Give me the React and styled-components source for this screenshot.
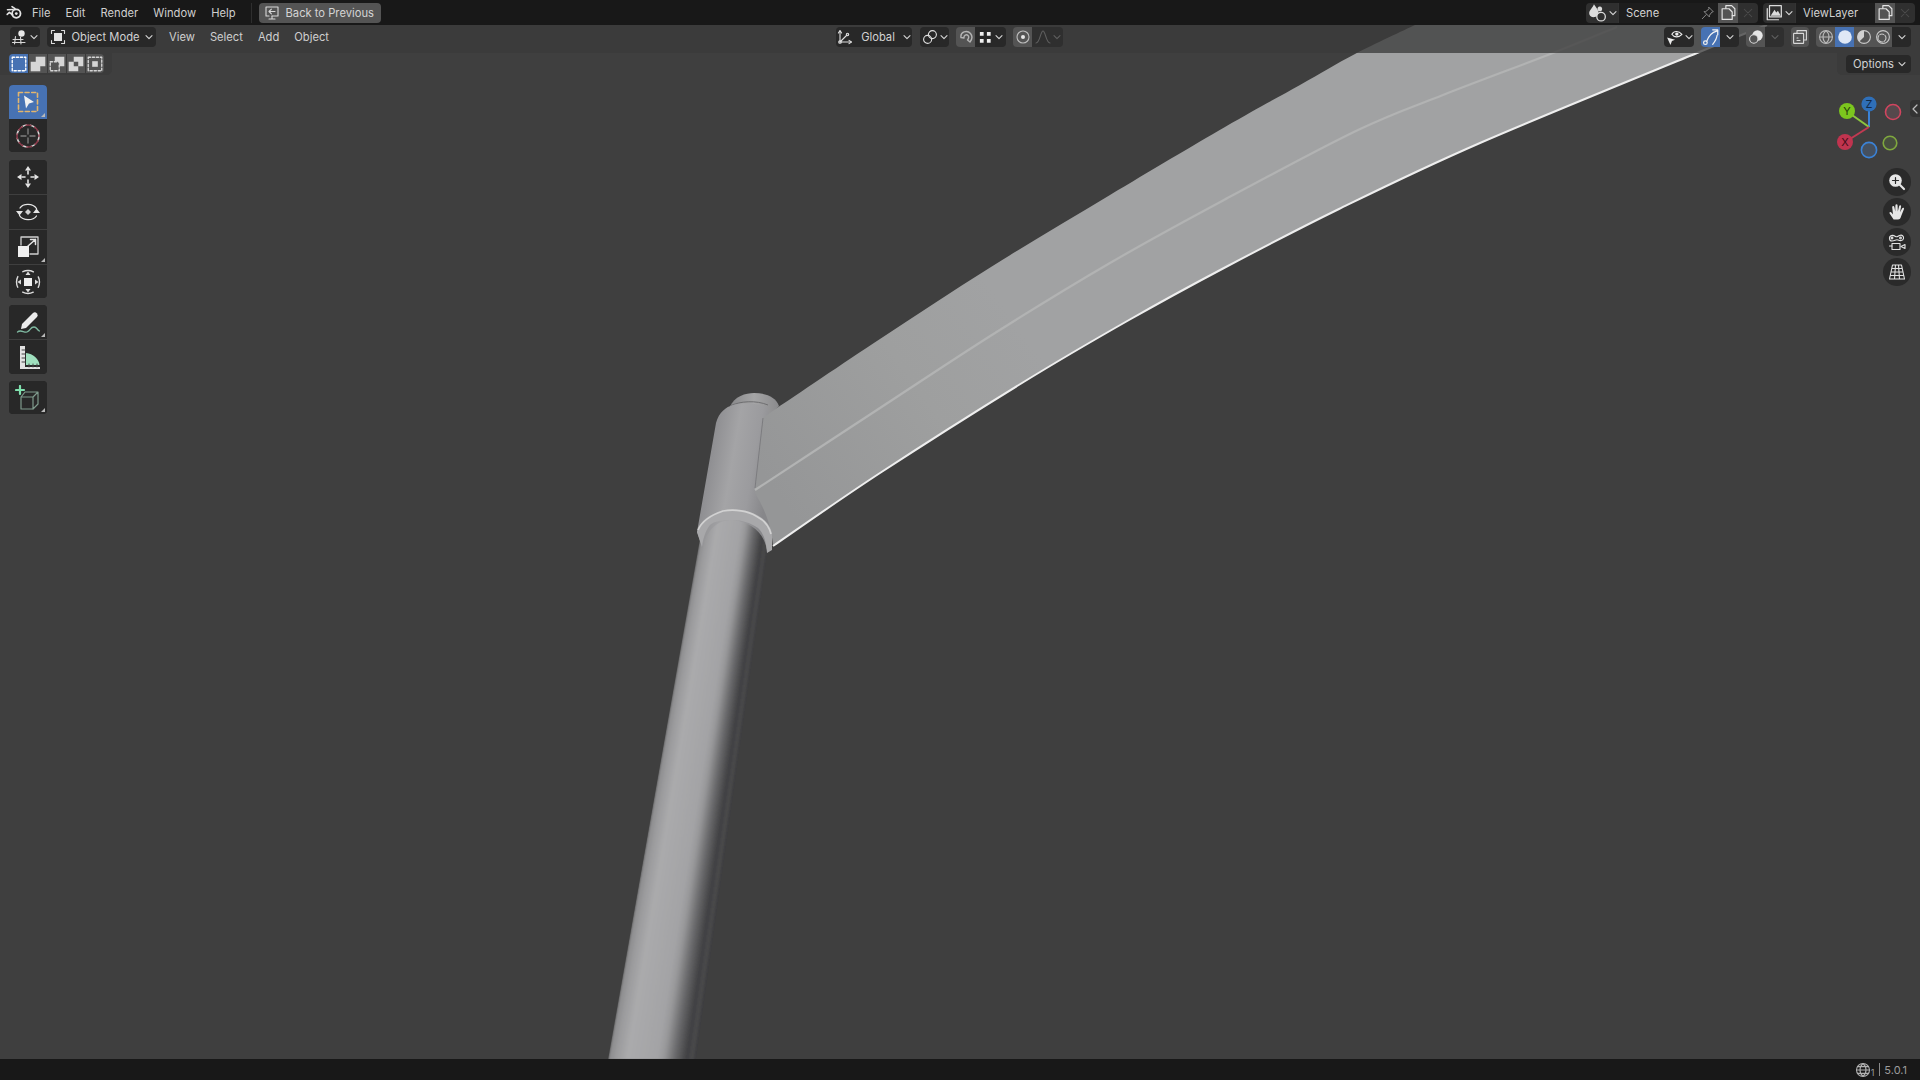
import React from 'react';
import styled, { createGlobalStyle } from 'styled-components';

const GlobalStyle = createGlobalStyle`
  html, body { margin: 0; padding: 0; background: #181818; overflow: hidden; }
  body { font-family: Inter, "Liberation Sans", sans-serif; }
`;

const Screen = styled.div`
  width: 1920px;
  height: 1080px;
  display: flex;
  flex-direction: column;
  font-size: 11.2px;
  color: #d2d2d2;
`;

const TopBar = styled.div`
  height: 25px;
  background: #181818;
  display: flex;
  align-items: center;
  padding: 0 5px 0 6px;
  flex: none;
`;

const Menu = styled.div`
  display: flex;
  gap: ${p => p.$gap || 15}px;
  align-items: center;
`;

const MenuItem = styled.span`
  color: #cfcfcf;
  line-height: 20px;
`;

const Divider = styled.div`
  width: 1px;
  height: 20px;
  background: #2e2e2e;
  margin: 0 7px 0 15px;
`;

const BackButton = styled.div`
  width: 122px;
  height: 20px;
  border-radius: 4px;
  background: #545454;
  display: flex;
  align-items: center;
  gap: 6px;
  padding-left: 5px;
  box-sizing: border-box;
  color: #d4d4d4;
`;

const Grow = styled.div`
  flex: 1;
`;

const Field = styled.div`
  width: ${p => p.$w}px;
  height: 20px;
  background: #1d1d1d;
  display: flex;
  align-items: center;
  justify-content: space-between;
  padding: 0 3px 0 7px;
  box-sizing: border-box;
  color: #d2d2d2;
  border-left: 1px solid #333;
`;

const Joined = styled.div`
  display: flex;
  align-items: center;
  margin-left: ${p => p.$ml || 0}px;
  & > *:first-child { border-radius: 4px 0 0 4px; }
  & > *:last-child { border-radius: 0 4px 4px 0; }
  & > *:only-child { border-radius: 4px; }
`;

const tones = {
  dark: '#282828',
  on: '#4772b3',
  lit: '#545454',
  dim: '#2f2f2f',
};

const Widget = styled.div`
  width: ${p => p.$w}px;
  height: ${p => p.$h || 20}px;
  flex: none;
  display: flex;
  align-items: center;
  justify-content: center;
  gap: ${p => p.$gap || 2}px;
  box-sizing: border-box;
  background: ${p => tones[p.$tone || 'dark']};
  color: ${p => (p.$faint ? '#5d5d5d' : '#dcdcdc')};
`;

const Viewport = styled.div`
  position: relative;
  flex: 1;
  background: #3f3f3f;
  overflow: hidden;
`;

const Scene = styled.svg`
  position: absolute;
  inset: 0;
  display: block;
`;

const Overlay = styled.div`
  position: absolute;
  inset: 0;
  display: flex;
  flex-direction: column;
`;

const HeaderRow = styled.div`
  height: 28px;
  flex: none;
  display: grid;
  grid-template-columns: 836px 1fr auto;
  align-items: center;
  background: rgba(58, 58, 58, 0.76);
  padding: 0 9px 4px 0;
  box-sizing: border-box;
`;

const HeaderGroup = styled.div`
  display: flex;
  align-items: center;
  padding-left: ${p => p.$pl || 0}px;
`;

const ModeLabel = styled.span`
  color: #d2d2d2;
  margin: 0 3px 0 3px;
`;

const SettingsRow = styled.div`
  height: 22px;
  flex: none;
  display: flex;
  justify-content: space-between;
`;

const SettingsCap = styled.div`
  width: ${p => p.$w}px;
  height: 22px;
  background: rgba(58, 58, 58, 0.76);
  border-radius: ${p => (p.$right ? '0 0 0 5px' : '0 0 5px 0')};
  display: flex;
  align-items: center;
  box-sizing: border-box;
  padding: 0 0 1px 9px;
`;

const OptionsButton = styled.div`
  width: 65px;
  height: 18px;
  background: #282828;
  border-radius: 4px;
  display: flex;
  align-items: center;
  justify-content: space-between;
  padding: 0 5px 0 7px;
  box-sizing: border-box;
  color: #d2d2d2;
`;

const SelectMode = styled.div`
  width: 19px;
  height: 19px;
  display: flex;
  align-items: center;
  justify-content: center;
  background: ${p => (p.$on ? '#4772b3' : '#545454')};
  border-left: ${p => (p.$on ? 'none' : '1px solid #3a3a3a')};
  box-sizing: border-box;
`;

const Toolbar = styled.div`
  position: absolute;
  left: 9px;
  top: 60px;
  display: flex;
  flex-direction: column;
`;

const ToolGroup = styled.div`
  width: 38px;
  margin-bottom: ${p => p.$mb || 0}px;
  border-radius: 4px;
  overflow: hidden;
  background: #282828;
  display: flex;
  flex-direction: column;
`;

const Tool = styled.div`
  position: relative;
  height: ${p => p.$h || 34}px;
  display: flex;
  align-items: center;
  justify-content: center;
  background: ${p => (p.$active ? '#4772b3' : '#282828')};
  border-top: ${p => (p.$sep ? '1px solid #3f3f3f' : 'none')};
  box-sizing: border-box;
  ${p => p.$corner && `
    &::after {
      content: '';
      position: absolute;
      right: 2px;
      bottom: 2px;
      border-style: solid;
      border-width: 0 0 4px 4px;
      border-color: transparent transparent #b9b9b9 transparent;
    }
  `}
`;

const GizmoBox = styled.svg`
  position: absolute;
  left: 1825px;
  top: 65px;
  display: block;
`;

const NavColumn = styled.div`
  position: absolute;
  left: 1883px;
  top: 143px;
  display: flex;
  flex-direction: column;
  gap: 2px;
`;

const NavButton = styled.div`
  width: 28px;
  height: 28px;
  border-radius: 50%;
  background: #2a2a2a;
  display: flex;
  align-items: center;
  justify-content: center;
`;

const SideTab = styled.div`
  position: absolute;
  right: 0;
  top: 75px;
  width: 10px;
  height: 17px;
  border-radius: 4px 0 0 4px;
  background: #333;
  display: flex;
  align-items: center;
  justify-content: center;
`;

const StatusBar = styled.div`
  height: 21px;
  flex: none;
  background: #181818;
  display: flex;
  align-items: center;
  justify-content: flex-end;
  padding-right: 13px;
  color: #9c9c9c;
  font-size: 11px;
`;

const Sub = styled.span`
  font-size: 9px;
  align-self: flex-end;
  margin: 0 5px 2px 0;
`;

const StatusSep = styled.span`
  width: 1px;
  height: 13px;
  background: #8a8a8a;
  margin-right: 4px;
`;

const Glyph = styled.svg`
  display: block;
  flex: none;
  fill: none;
  stroke: currentColor;
  stroke-width: ${p => p.$sw || 1.1};
  stroke-linecap: round;
  stroke-linejoin: round;
`;

const Ico = ({ s = 16, sw, color, children }) => (
  <Glyph width={s} height={s} viewBox="0 0 16 16" $sw={sw} style={color ? { color } : undefined}>
    {children}
  </Glyph>
);

const Chevron = ({ color = '#d6d6d6' }) => (
  <Glyph width={8} height={8} viewBox="0 0 8 8" $sw={1.1} style={{ color }}>
    <path d="M1 2.6 L4 5.6 L7 2.6" />
  </Glyph>
);

const W = '#e4e4e4';

const BlenderLogo = () => (
  <Glyph width={17} height={15} viewBox="0 0 17 15" $sw={1.8} style={{ color: W }}>
    <circle cx="10.3" cy="8.6" r="4.2" />
    <circle cx="10.3" cy="8.6" r="1.4" fill={W} stroke="none" />
    <path d="M7 4.5 L1.5 4.8 M9 3.7 L6 1.6 M6.8 10 L3.4 7.4 L1.2 9.4" strokeWidth="1.6" />
  </Glyph>
);

const BackIcon = () => (
  <Ico s={16} color="#d8d8d8">
    <path d="M5 11 H2 V2 H14 V11 H8" />
    <path d="M8 11 V14 M5 14 H11" />
    <path d="M11 6.5 H5 M7.4 4.2 L5 6.5 L7.4 8.8" />
  </Ico>
);

const ViewportIcon = () => (
  <Ico s={16} color="#d8d8d8">
    <path d="M1 10.5 H11 M3.5 7.5 L2.5 15 M8.5 8 L9 15 M0.5 13.5 H13" />
    <circle cx="9.5" cy="4.5" r="3.2" fill="#e8e8e8" stroke="none" />
  </Ico>
);

const ObjectIcon = () => (
  <Ico s={16} color="#dcdcdc">
    <rect x="4" y="4" width="8" height="8" fill="#e4e4e4" stroke="none" />
    <path d="M4.5 1.5 H1.5 V4.5 M11.5 1.5 H14.5 V4.5 M1.5 11.5 V14.5 H4.5 M14.5 11.5 V14.5 H11.5" />
  </Ico>
);

const DashBox = ({ x = 2.5, y = 2.5, s = 11, color = '#e8e8e8' }) => (
  <rect x={x} y={y} width={s} height={s} fill="none" stroke={color} strokeWidth="1.2" strokeDasharray="2 1.6" />
);

const ModeSet = () => (
  <Ico s={18}><DashBox x={2} y={2} s={12} color="#ffffff" /></Ico>
);

const ModeExtend = () => (
  <Ico s={18}>
    <rect x="1.5" y="6" width="8.5" height="8.5" fill="#d6d6d6" stroke="none" />
    <rect x="6" y="1.5" width="8.5" height="8.5" fill="#d6d6d6" stroke="none" />
  </Ico>
);

const ModeSubtract = () => (
  <Ico s={18}>
    <DashBox x={2} y={6} s={8} color="#d6d6d6" />
    <path d="M6 1.5 H14.5 V10 H10 V6 H6 Z" fill="#d6d6d6" stroke="none" />
  </Ico>
);

const ModeInvert = () => (
  <Ico s={18}>
    <path d="M6 1.5 H14.5 V10 H10 V6 H6 Z M1.5 6 H6 V10 H10 V14.5 H1.5 Z" fill="#d6d6d6" stroke="none" />
  </Ico>
);

const ModeIntersect = () => (
  <Ico s={18}>
    <DashBox x={2} y={2} s={12} color="#d6d6d6" />
    <rect x="5.5" y="5.5" width="5" height="5" fill="#d6d6d6" stroke="none" />
  </Ico>
);

const GlobalIcon = () => (
  <Ico s={16} color="#e0e0e0">
    <path d="M3 2 V13 H14" />
    <path d="M3 13 L10 6" />
    <path d="M1.4 4 L3 1.6 L4.6 4 M12 11.4 L14.5 13 L12 14.6" />
    <circle cx="3" cy="13" r="1.3" />
    <circle cx="10.5" cy="5.5" r="1.2" />
  </Ico>
);

const PivotIcon = () => (
  <Ico s={16} color="#e0e0e0">
    <circle cx="5.6" cy="10.4" r="4" />
    <circle cx="10.4" cy="5.6" r="4" />
  </Ico>
);

const MagnetIcon = () => (
  <Ico s={16} color="#b4b4b4" sw={1.4}>
    <path d="M3 8.5 C2 3 9 0.5 12.5 4.5 C14.5 7 14 10.5 12 13 L9.5 11 C11 9 11 7.5 10 6.5 C8.5 5 5.5 6 6 9 Z" />
  </Ico>
);

const GridIcon = () => (
  <Ico s={15}>
    <path d="M2 2 H6 V6 H2 Z M9.5 2 H13.5 V6 H9.5 Z M2 9.5 H6 V13.5 H2 Z M9.5 9.5 H13.5 V13.5 H9.5 Z" fill="#f0f0f0" stroke="none" />
  </Ico>
);

const ProportionalIcon = () => (
  <Ico s={16} color="#bcbcbc">
    <circle cx="8" cy="8" r="6" />
    <circle cx="8" cy="8" r="2" fill="#e6e6e6" stroke="none" />
  </Ico>
);

const FalloffIcon = () => (
  <Ico s={16} color="#5f5f5f">
    <path d="M1 14 C5 14 5.5 2 8 2 C10.5 2 11 14 15 14" />
  </Ico>
);

const VisibilityIcon = () => (
  <Ico s={17} color="#ececec">
    <path d="M5.5 5 C7.5 1.5 12 1.5 15 5 C12 8.2 7.5 8.2 5.5 5 Z" />
    <circle cx="10.2" cy="4.8" r="1.6" fill="#ececec" stroke="none" />
    <path d="M1 8 L8.5 10 L5.6 11.2 L4.2 15 Z" fill="#ececec" stroke="none" />
  </Ico>
);

const GizmoToggleIcon = () => (
  <Ico s={18} color="#f4f4f4">
    <circle cx="3" cy="13" r="1.6" />
    <path d="M4.2 11.8 C6 7 8 4 13 2.8 M9.5 1.6 H14 V6" />
    <path d="M9.5 14.5 C12 11.5 13.2 9 13.4 6.5" />
  </Ico>
);

const OverlayIcon = () => (
  <Ico s={16} color="#dcdcdc">
    <circle cx="9.5" cy="6.5" r="5.2" fill="#e6e6e6" stroke="none" />
    <circle cx="5.8" cy="10" r="4.2" fill="#545454" />
  </Ico>
);

const XrayIcon = () => (
  <Ico s={16} color="#d8d8d8">
    <path d="M5 4 V1.6 H14.4 V11 H12" />
    <rect x="1.6" y="4.4" width="10" height="10" rx="0.5" />
    <path d="M5 9 H6 M5 11.5 H8" />
  </Ico>
);

const WireIcon = () => (
  <Ico s={16} color="#b8b8b8">
    <circle cx="8" cy="8" r="6.4" />
    <path d="M1.6 8 H14.4 M8 1.6 C4 5 4 11 8 14.4 C12 11 12 5 8 1.6" />
  </Ico>
);

const SolidIcon = () => (
  <Ico s={16}><circle cx="8" cy="8" r="6.8" fill="#dfe8f6" stroke="none" /></Ico>
);

const MaterialIcon = () => (
  <Ico s={16} color="#c8c8c8">
    <circle cx="8" cy="8" r="6.4" />
    <path d="M8 1.6 A6.4 6.4 0 0 0 3.4 12.5 L8 8 Z" fill="#d0d0d0" stroke="none" />
  </Ico>
);

const RenderIcon = () => (
  <Ico s={16} color="#c8c8c8">
    <circle cx="8" cy="8" r="6.4" />
    <circle cx="7" cy="9" r="4" strokeDasharray="4 1.4" />
  </Ico>
);

const SceneIcon = () => (
  <Ico s={19} color="#dcdcdc">
    <path d="M5 1 C7 4 9 6 9 8.5 C9 11 6.5 12 4.5 12 C2 12 1 10 1 8.5 C1 6 4 4 5 1 Z" fill="#dcdcdc" stroke="none" />
    <circle cx="11" cy="11.5" r="3.6" fill="#2f2f2f" />
    <path d="M10 3 A2 2 0 1 1 9.9 3" fill="#dcdcdc" stroke="none" />
  </Ico>
);

const PinIcon = () => (
  <Ico s={14} color="#8a8a8a">
    <path d="M9 1.5 L14 6.5 L12.4 7 L9.6 10.6 L9.6 12.5 L3.5 6.4 L5.4 6.4 L9 3.4 Z M6 9.8 L1.5 14.5" />
  </Ico>
);

const CopyIcon = () => (
  <Ico s={17} color="#e4e4e4">
    <path d="M5.5 4 V1.5 H11 L14 4.5 V11 H11.5" />
    <path d="M2 4.5 H8.5 L11.5 7.5 V14.5 H2 Z" />
  </Ico>
);

const CrossIcon = () => (
  <Ico s={12} color="#4c4c4c" sw={1.4}>
    <path d="M3 3 L13 13 M13 3 L3 13" />
  </Ico>
);

const LayerIcon = () => (
  <Ico s={18} color="#dcdcdc">
    <rect x="4" y="1.5" width="10.5" height="10" />
    <path d="M2 4 V14 H12" />
    <path d="M5 10.5 L8.5 5 L10 7.5 L11.5 6 L14 10.5 Z" fill="#dcdcdc" stroke="none" />
  </Ico>
);

const Tg = ({ children }) => (
  <svg width="26" height="26" viewBox="0 0 26 26" style={{ display: 'block' }} fill="none" strokeLinecap="round" strokeLinejoin="round">
    {children}
  </svg>
);

const BoxTool = () => (
  <Tg>
    <rect x="3.5" y="3.5" width="19" height="19" stroke="#e2b56d" strokeWidth="1.6" strokeDasharray="4 2.6" />
    <path d="M9 6.5 L19 13 L14 14.5 L11 19.5 Z" fill="#f0f0f0" />
  </Tg>
);

const CursorTool = () => (
  <Tg>
    <circle cx="13" cy="13" r="11" stroke="#d8d8d8" strokeWidth="1.5" strokeDasharray="5 4" />
    <circle cx="13" cy="13" r="11" stroke="#8d3a4a" strokeWidth="1.5" strokeDasharray="5 4" strokeDashoffset="4.5" />
    <path d="M13 6 V11 M13 15 V20 M6 13 H11 M15 13 H20" stroke="#7d7d7d" strokeWidth="1.4" />
  </Tg>
);

const MoveTool = () => (
  <Tg>
    <path d="M13 2 L16 6.5 H10 Z M13 24 L16 19.5 H10 Z M2 13 L6.5 10 V16 Z M24 13 L19.5 10 V16 Z" fill="#e4e4e4" />
    <path d="M13 7 V10 M13 16 V19 M7 13 H10 M16 13 H19" stroke="#e4e4e4" strokeWidth="1.6" />
  </Tg>
);

const RotateTool = () => (
  <Tg>
    <path d="M5 9 C8 4 18 4 21.5 9.5 M21.5 17 C18 22 8 22 4.5 16.5" stroke="#e4e4e4" strokeWidth="1.3" />
    <path d="M1 12 H8 L4.5 16.5 Z M25 14 H18 L21.5 9.5 Z" fill="#e4e4e4" />
    <path d="M13 10 L16 13 L13 16 L10 13 Z" fill="#cfcfcf" />
  </Tg>
);

const ScaleTool = () => (
  <Tg>
    <path d="M6 11 V3 H23 V20 H15" stroke="#cfcfcf" strokeWidth="1.3" />
    <rect x="3" y="12" width="11" height="11" fill="#efefef" />
    <path d="M13 12 L20.5 5.5 M15.5 5.5 H20.5 V10.5" stroke="#e4e4e4" strokeWidth="1.5" />
  </Tg>
);

const TransformTool = () => (
  <Tg>
    <circle cx="13" cy="13" r="11.5" stroke="#dcdcdc" strokeWidth="1.4" strokeDasharray="11 7" strokeDashoffset="5.5" />
    <rect x="9" y="9" width="8" height="8" fill="#efefef" />
    <path d="M13 2.5 L15.5 6 H10.5 Z M13 23.5 L15.5 20 H10.5 Z M2.5 13 L6 10.5 V15.5 Z M23.5 13 L20 10.5 V15.5 Z" fill="#dcdcdc" />
  </Tg>
);

const AnnotateTool = () => (
  <Tg>
    <path d="M7 15 L18 4 Q20 2.5 22 4.5 Q23.5 6.5 22 8 L11 19 L6 20 Z" fill="#ececec" />
    <path d="M2.5 23 C6 20 9 24 12 23 C16 21.5 15 18 19 18 C22 18 22 21 24.5 22" stroke="#7fb9a1" strokeWidth="1.3" />
  </Tg>
);

const MeasureTool = () => (
  <Tg>
    <path d="M11 9 C18 9.5 24 15 24.5 21 H11 Z" fill="#9fe0be" />
    <path d="M5 2 H10 V23 H25 V25 H5 Z" fill="#e2e2e2" />
    <path d="M7 6 H10 M7 10 H10 M7 14 H10 M7 18 H10 M14 23 V20 M18 23 V20 M22 23 V20" stroke="#444" strokeWidth="1" />
  </Tg>
);

const AddCubeTool = () => (
  <Tg>
    <path d="M6 12 H18 V24 H6 Z M6 12 L10 7 H23 L18 12 M23 7 V19 L18 24" stroke="#7e9a8c" strokeWidth="1.2" />
    <path d="M5 1 V9 M1 5 H9" stroke="#7fe0ad" strokeWidth="2.2" />
  </Tg>
);

const ZoomIcon = () => (
  <Glyph width={18} height={18} viewBox="0 0 18 18" style={{ color: '#2a2a2a' }}>
    <circle cx="7.5" cy="7.5" r="6.3" fill="#e6e6e6" stroke="none" />
    <path d="M7.5 4.5 V10.5 M4.5 7.5 H10.5" strokeWidth="1.2" />
    <path d="M12 12 L16 16" stroke="#e6e6e6" strokeWidth="2.2" />
  </Glyph>
);

const HandIcon = () => (
  <Glyph width={18} height={18} viewBox="0 0 18 18" style={{ color: '#e6e6e6' }}>
    <path fill="#e6e6e6" stroke="none" d="M5.6 16.5 L1.6 10.6 Q1 9.4 2.2 9.1 Q3 9 3.8 10 L5 11.4 L4.2 4.2 Q4.2 3 5.2 3 Q6.2 3 6.4 4.2 L7.3 8.6 L7.4 2.4 Q7.5 1.2 8.5 1.2 Q9.5 1.2 9.6 2.4 L9.8 8.5 L11.2 3 Q11.5 2 12.4 2.2 Q13.3 2.5 13.1 3.6 L12 9.2 L14.2 5.2 Q14.8 4.4 15.6 4.8 Q16.3 5.3 15.9 6.2 L13.2 13 Q12.4 16.5 10 16.5 Z" />
  </Glyph>
);

const CameraIcon = () => (
  <Glyph width={20} height={20} viewBox="0 0 20 20" style={{ color: '#e2e2e2' }}>
    <path d="M5 9 C2 9 1.5 4.5 4.5 3.5 C6 3 7 3.5 8.5 4.5 C10 5.5 10.5 4.5 12.5 3.5 C15 2.5 17 4 16.5 6.5 C16 9 13 9 11 8 C9 7 8 9 5 9 Z" />
    <circle cx="5" cy="6" r="0.9" />
    <circle cx="13.5" cy="6" r="0.9" />
    <rect x="5" y="11.5" width="8" height="6" />
    <path d="M2.5 14 H5 M14 14.5 L18 12.5 V16.5 Z" />
  </Glyph>
);

const OrthoIcon = () => (
  <Glyph width={18} height={18} viewBox="0 0 18 18" style={{ color: '#e2e2e2' }}>
    <path d="M4.5 2 H13.5 L16.5 16 H1.5 Z M3 9 H15 M2.3 12.5 H15.8 M3.8 5.5 H14.2 M7.5 2 L6.5 16 M10.5 2 L11.5 16" />
  </Glyph>
);

const GlobeIcon = () => (
  <Ico s={16} color="#b0b0b0">
    <circle cx="8" cy="8" r="6.5" />
    <path d="M1.5 8 H14.5 M2.5 4.6 H13.5 M2.5 11.4 H13.5 M8 1.5 C4 5 4 11 8 14.5 C12 11 12 5 8 1.5" />
  </Ico>
);

// model outline, in page coordinates
const UPPER = [[777, 408], [880, 339], [991, 267], [1110, 195], [1225, 127], [1300, 85], [1355, 54], [1415, 25]];
const LOWER = [[773, 546], [880, 473], [1022, 383], [1129, 320], [1224, 268], [1339, 209], [1480, 143], [1697, 53], [1767, 25]];
const CREASE = [[755, 490], [880, 408], [995, 333], [1110, 263], [1224, 200], [1358, 130], [1443, 95], [1553, 53], [1617, 27]];

// smooth curve through the points
const curve = pts => {
  let d = `M${pts[0][0]} ${pts[0][1]}`;
  for (let i = 0; i < pts.length - 1; i++) {
    const a = pts[i - 1] || pts[i];
    const b = pts[i];
    const c = pts[i + 1];
    const e = pts[i + 2] || c;
    d += ` C${b[0] + (c[0] - a[0]) / 6} ${b[1] + (c[1] - a[1]) / 6} ${c[0] - (e[0] - b[0]) / 6} ${c[1] - (e[1] - b[1]) / 6} ${c[0]} ${c[1]}`;
  }
  return d;
};

const bladeShape = `${curve(UPPER)} L1767 25 ${curve([...LOWER].reverse()).replace(/^M[^C]*/, '')} C772 532 768 514 755 493 L763 418 Z`;

const SHAFT_STOPS = [
  [0, 0x8c], [0.08, 0x9c], [0.2, 0xaa], [0.55, 0xa3], [0.62, 0x98], [0.75, 0x68],
  [0.84, 0x4c], [0.89, 0x3e], [0.92, 0x49], [0.965, 0x48], [0.985, 0x33], [1, 0x39],
];

const shade = t => {
  for (let i = 0; i < SHAFT_STOPS.length - 1; i++) {
    const [a, va] = SHAFT_STOPS[i];
    const [b, vb] = SHAFT_STOPS[i + 1];
    if (t <= b) return Math.round(va + ((vb - va) * (t - a)) / (b - a));
  }
  return 0x39;
};

// the shaft narrows towards the collar, so its shading is laid in long strips
const ShaftStrips = () => {
  const n = 40;
  const strips = [];
  for (let i = 0; i < n; i++) {
    const t0 = i / n;
    const t1 = (i + 3) / n;
    const x = (t, top) => (top ? 706 + 68 * t : 608 + 88 * t);
    const v = shade(i / n);
    strips.push(
      <polygon
        key={i}
        points={`${x(t0, true)},505 ${x(t1, true)},505 ${x(t1, false)},1060 ${x(t0, false)},1060`}
        fill={`rgb(${v},${v},${v + 2})`}
      />
    );
  }
  return strips;
};

const Model = () => (
  <Scene width="1920" height="1034" viewBox="0 25 1920 1034">
    <defs>
      <linearGradient id="bladeFill" gradientUnits="userSpaceOnUse" x1="760" y1="470" x2="1000" y2="300">
        <stop offset="0" stopColor="#959697" />
        <stop offset="0.6" stopColor="#9e9f9f" />
        <stop offset="1" stopColor="#a1a2a3" />
      </linearGradient>
      <linearGradient id="sleeveFill" gradientUnits="userSpaceOnUse" x1="700" y1="460" x2="770" y2="472">
        <stop offset="0" stopColor="#77777b" />
        <stop offset="0.14" stopColor="#8f8f92" />
        <stop offset="0.45" stopColor="#a4a4a6" />
        <stop offset="0.75" stopColor="#9b9b9e" />
        <stop offset="1" stopColor="#87878a" />
      </linearGradient>
      <linearGradient id="capFill" gradientUnits="userSpaceOnUse" x1="730" y1="400" x2="778" y2="400">
        <stop offset="0" stopColor="#88888a" />
        <stop offset="0.5" stopColor="#a5a5a6" />
        <stop offset="1" stopColor="#8b8b8d" />
      </linearGradient>
      <filter id="soft"><feGaussianBlur stdDeviation="1.2" /></filter>
      <filter id="softer"><feGaussianBlur stdDeviation="0.6" /></filter>
      <clipPath id="shaftClip"><polygon points="706,505 774,505 696,1060 608,1060" /></clipPath>
    </defs>

    <g clipPath="url(#shaftClip)">
      <g filter="url(#soft)"><ShaftStrips /></g>
    </g>

    <path d="M730 407 C734 396 746 393 754 393 C766 393 776 397 779 406 L770 416 L735 416 Z" fill="url(#capFill)" />
    <path d="M730 406 C740 401 756 400 768 405" stroke="#6f6f71" strokeWidth="1" fill="none" />

    <path
      d="M716 423 C719 412 726 407 733 405 C744 402 756 403 768 408 L770 430 L762 493 L770 512 L773 535 L767 550 C764 532 750 522 733 520 C716 520 708 530 702 547 L697 532 Z"
      fill="url(#sleeveFill)"
    />

    <path d={bladeShape} fill="url(#bladeFill)" />
    <path d="M763 418 L755 488" stroke="#7c7c7f" strokeWidth="1" fill="none" filter="url(#softer)" />
    <path d={curve(CREASE)} stroke="#b2b3b3" strokeWidth="2.2" fill="none" filter="url(#softer)" />
    <path d={curve(LOWER)} stroke="#eeeeee" strokeWidth="2" fill="none" filter="url(#softer)" />

    <path
      d="M697 532 C700 521 708 515 723 510 C735 508 748 510 757 515 C766 520 771 526 772 534 L772 550 L767 553 C766 541 764 534 758 528 C751 523 742 520 733 520 C723 520 714 521 710 525 C706 530 703 538 702 547 Z"
      fill="#a8a8aa"
    />
    <path
      d="M698 530 C702 521 711 515 723 511 C735 509 748 511 756 516 C764 520 769 526 771 534"
      stroke="#d2d2d2"
      strokeWidth="1.7"
      fill="none"
      filter="url(#softer)"
    />
  </Scene>
);

const Gizmo = () => (
  <GizmoBox width="90" height="90" viewBox="1825 90 90 90">
    <path d="M1869 127 L1869 110" stroke="#3b82d6" strokeWidth="2" />
    <path d="M1869 127 L1852 115" stroke="#8cc63f" strokeWidth="2" />
    <path d="M1869 127 L1850 139" stroke="#c23a52" strokeWidth="2" />
    <circle cx="1893" cy="112" r="7.5" fill="#56484c" stroke="#d1455f" strokeWidth="1.6" />
    <circle cx="1890" cy="143" r="6.8" fill="#474f3f" stroke="#7fa83e" strokeWidth="1.6" />
    <circle cx="1869" cy="150" r="7.6" fill="#45505f" stroke="#3b82d6" strokeWidth="1.6" />
    <circle cx="1869" cy="104" r="7.6" fill="#2f6fb8" />
    <circle cx="1847" cy="111" r="8" fill="#7cc61e" />
    <circle cx="1845" cy="142" r="8" fill="#c0344f" />
    <text x="1869" y="108" textAnchor="middle" fontSize="11" fontFamily="Inter, sans-serif" fill="#102a4a">Z</text>
    <text x="1847" y="115" textAnchor="middle" fontSize="11" fontFamily="Inter, sans-serif" fill="#26400a">Y</text>
    <text x="1845" y="146" textAnchor="middle" fontSize="11" fontFamily="Inter, sans-serif" fill="#3f0c18">X</text>
  </GizmoBox>
);

export default function App() {
  return (
    <Screen>
      <GlobalStyle />
      <TopBar>
        <BlenderLogo />
        <Menu style={{ marginLeft: 9 }}>
          <MenuItem>File</MenuItem>
          <MenuItem>Edit</MenuItem>
          <MenuItem>Render</MenuItem>
          <MenuItem>Window</MenuItem>
          <MenuItem>Help</MenuItem>
        </Menu>
        <Divider />
        <BackButton>
          <BackIcon />
          Back to Previous
        </BackButton>
        <Grow />
        <Joined>
          <Widget $w={32} $tone="dim" $gap={0}><SceneIcon /><Chevron /></Widget>
          <Field $w={100}>Scene<PinIcon /></Field>
          <Widget $w={20} $tone="lit"><CopyIcon /></Widget>
          <Widget $w={20} $tone="dim"><CrossIcon /></Widget>
        </Joined>
        <Joined $ml={5}>
          <Widget $w={32} $tone="dim" $gap={0}><LayerIcon /><Chevron /></Widget>
          <Field $w={80}>ViewLayer</Field>
          <Widget $w={20} $tone="lit"><CopyIcon /></Widget>
          <Widget $w={20} $tone="dim"><CrossIcon /></Widget>
        </Joined>
      </TopBar>

      <Viewport>
        <Model />
        <Overlay>
          <HeaderRow>
            <HeaderGroup $pl={10}>
              <Joined><Widget $w={30}><ViewportIcon /><Chevron /></Widget></Joined>
              <Joined $ml={7}>
                <Widget $w={109} $gap={0}>
                  <ObjectIcon />
                  <ModeLabel>Object Mode</ModeLabel>
                  <Chevron />
                </Widget>
              </Joined>
              <Menu style={{ marginLeft: 13 }}>
                <MenuItem>View</MenuItem>
                <MenuItem>Select</MenuItem>
                <MenuItem>Add</MenuItem>
                <MenuItem>Object</MenuItem>
              </Menu>
            </HeaderGroup>
            <HeaderGroup>
              <Joined>
                <Widget $w={76} $gap={0}>
                  <GlobalIcon />
                  <ModeLabel style={{ margin: '0 6px' }}>Global</ModeLabel>
                  <Chevron />
                </Widget>
              </Joined>
              <Joined $ml={8}><Widget $w={29}><PivotIcon /><Chevron /></Widget></Joined>
              <Joined $ml={7}>
                <Widget $w={19} $tone="lit"><MagnetIcon /></Widget>
                <Widget $w={31}><GridIcon /><Chevron /></Widget>
              </Joined>
              <Joined $ml={7}>
                <Widget $w={19} $tone="lit"><ProportionalIcon /></Widget>
                <Widget $w={31} $tone="dim"><FalloffIcon /><Chevron color="#5f5f5f" /></Widget>
              </Joined>
            </HeaderGroup>
            <HeaderGroup>
              <Joined><Widget $w={30}><VisibilityIcon /><Chevron /></Widget></Joined>
              <Joined $ml={7}>
                <Widget $w={19} $tone="on"><GizmoToggleIcon /></Widget>
                <Widget $w={19}><Chevron /></Widget>
              </Joined>
              <Joined $ml={7}>
                <Widget $w={19} $tone="lit"><OverlayIcon /></Widget>
                <Widget $w={19} $tone="dim"><Chevron color="#5f5f5f" /></Widget>
              </Joined>
              <Joined $ml={7}>
                <Widget $w={18} $tone="lit"><XrayIcon /></Widget>
              </Joined>
              <Joined $ml={7}>
                <Widget $w={19} $tone="lit"><WireIcon /></Widget>
                <Widget $w={19} $tone="on"><SolidIcon /></Widget>
                <Widget $w={19} $tone="lit"><MaterialIcon /></Widget>
                <Widget $w={19} $tone="lit"><RenderIcon /></Widget>
                <Widget $w={19}><Chevron /></Widget>
              </Joined>
            </HeaderGroup>
          </HeaderRow>
          <SettingsRow>
            <SettingsCap $w={112}>
              <Joined>
                <SelectMode $on><ModeSet /></SelectMode>
                <SelectMode><ModeExtend /></SelectMode>
                <SelectMode><ModeSubtract /></SelectMode>
                <SelectMode><ModeInvert /></SelectMode>
                <SelectMode><ModeIntersect /></SelectMode>
              </Joined>
            </SettingsCap>
            <SettingsCap $w={83} $right>
              <OptionsButton>Options<Chevron /></OptionsButton>
            </SettingsCap>
          </SettingsRow>
        </Overlay>

        <Toolbar>
          <ToolGroup $mb={8}>
            <Tool $active $corner><BoxTool /></Tool>
            <Tool $h={33}><CursorTool /></Tool>
          </ToolGroup>
          <ToolGroup $mb={7}>
            <Tool><MoveTool /></Tool>
            <Tool $sep $h={35}><RotateTool /></Tool>
            <Tool $sep $h={35} $corner><ScaleTool /></Tool>
            <Tool $sep><TransformTool /></Tool>
          </ToolGroup>
          <ToolGroup $mb={7}>
            <Tool $corner><AnnotateTool /></Tool>
            <Tool $sep $h={35}><MeasureTool /></Tool>
          </ToolGroup>
          <ToolGroup>
            <Tool $h={33} $corner><AddCubeTool /></Tool>
          </ToolGroup>
        </Toolbar>

        <Gizmo />
        <NavColumn>
          <NavButton><ZoomIcon /></NavButton>
          <NavButton><HandIcon /></NavButton>
          <NavButton><CameraIcon /></NavButton>
          <NavButton><OrthoIcon /></NavButton>
        </NavColumn>
        <SideTab>
          <Glyph width={6} height={10} viewBox="0 0 6 10" $sw={1.2} style={{ color: '#bdbdbd' }}>
            <path d="M5 1 L1 5 L5 9" />
          </Glyph>
        </SideTab>
      </Viewport>

      <StatusBar>
        <GlobeIcon />
        <Sub>1</Sub>
        <StatusSep />
        5.0.1
      </StatusBar>
    </Screen>
  );
}
